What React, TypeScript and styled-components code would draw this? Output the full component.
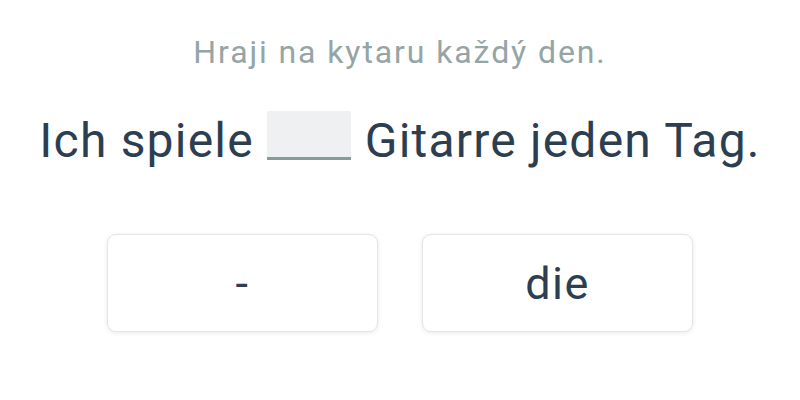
import styled, { createGlobalStyle } from "styled-components";

const GlobalStyle = createGlobalStyle`
  html, body {
    margin: 0;
    padding: 0;
    background: #ffffff;
    font-family: Roboto, "Liberation Sans", sans-serif;
  }
`;

const Page = styled.div`
  width: 800px;
  height: 400px;
  display: flex;
  flex-direction: column;
  align-items: center;
  padding-top: 30px;
  box-sizing: border-box;
`;

const Hint = styled.div`
  color: #95a5a6;
  font-size: 32px;
  line-height: 44px;
  letter-spacing: 1.9px;
`;

const Sentence = styled.div`
  margin-top: 37px;
  color: #2c3e50;
  font-size: 48px;
  line-height: 50px;
  letter-spacing: 1.2px;
  white-space: nowrap;
`;

const Blank = styled.span`
  display: inline-block;
  width: 84px;
  height: 46px;
  margin: 0 14px 0 13px;
  vertical-align: -3px;
  background: #eef0f2;
  border-bottom: 3px solid #879b9b;
  border-radius: 2px 2px 0 0;
`;

const Options = styled.div`
  margin-top: 68px;
  display: flex;
  gap: 44px;
`;

const Option = styled.button`
  width: 271px;
  height: 98px;
  background: #ffffff;
  border: 1px solid #e3e5e8;
  border-radius: 9px;
  box-shadow: 0 1px 5px rgba(0, 0, 0, 0.09);
  color: #2c3e50;
  font-family: Roboto, "Liberation Sans", sans-serif;
  font-size: 45px;
  letter-spacing: 1.5px;
  cursor: pointer;
`;

export default function App() {
  return (
    <Page>
      <GlobalStyle />
      <Hint>Hraji na kytaru každý den.</Hint>
      <Sentence>
        Ich spiele<Blank />Gitarre jeden Tag.
      </Sentence>
      <Options>
        <Option>-</Option>
        <Option>die</Option>
      </Options>
    </Page>
  );
}
